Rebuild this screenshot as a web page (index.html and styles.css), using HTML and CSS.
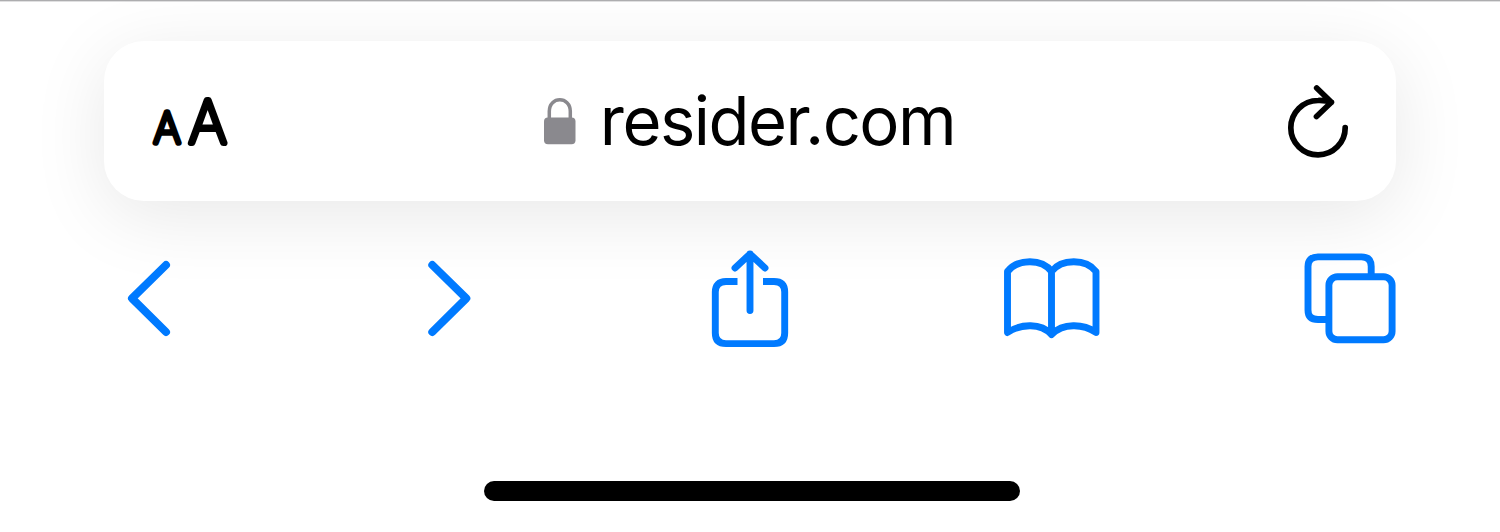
FILE: index.html
```html
<!DOCTYPE html>
<html lang="en">
<head>
<meta charset="utf-8">
<title>resider.com</title>
<link rel="stylesheet" href="styles.css">
</head>
<body>
<div class="browser-bar">
  <div class="address">
    <svg class="text-size" viewBox="0 0 82 60" role="img" aria-label="Text size">
      <text class="glyph small" x="3.7" y="52" textLength="26.6" lengthAdjust="spacingAndGlyphs">A</text>
      <text class="glyph large" x="39.1" y="52" textLength="37.4" lengthAdjust="spacingAndGlyphs">A</text>
    </svg>
    <div class="site">
      <svg class="lock" viewBox="0 0 32 46">
        <path d="M5.3 22V13.300C5.3-2 26.3-2 26.3 13.300V22" fill="none" stroke="#8a898e" stroke-width="3.5"/>
        <rect y="19.5" width="31.5" height="26.7" rx="4" fill="#8a898e"/>
      </svg>
      <span class="domain">resider.com</span>
    </div>
    <svg class="reload line" viewBox="0 0 64 76">
      <path d="M59.2 44.5A27.2 27.2 0 1 1 32 17.5Q39 17.2 45.4 19.3M30.7 5L45.4 19.3L30.5 33.5"/>
    </svg>
  </div>
  <nav class="tools">
    <svg class="chevron line" viewBox="0 0 44 76"><path d="M38 4L4 37.300L38 71"/></svg>
    <svg class="chevron line" viewBox="0 0 44 76"><path d="M4.300 4L38.300 37.300L4.300 71"/></svg>
    <svg class="share line" viewBox="0 0 78 100">
      <path class="butt" d="M26.500 32.500H15Q4.300 32.500 4.300 43V84Q4.300 94.600 15 94.600H63Q73.700 94.600 73.700 84V43Q73.700 32.500 63 32.500H52"/>
      <path d="M39 61.500V5M24 19L39 5L54 19"/>
    </svg>
    <svg class="book line" viewBox="0 0 98 82">
      <path d="M4.500 13.500C15 .5 39 .5 48.500 13.500C58.500 .5 83 .5 93 13.500V74.500C80 65.500 60 65 48.500 76.500C38 65 18 65.500 4.500 74.500ZM48.500 13.500V76.500"/>
    </svg>
    <svg class="tabs line" viewBox="0 0 92 92">
      <path class="butt" d="M23 66.500H14Q4 66.500 4 57V13.500Q4 3.900 14 3.900H57.500Q67.200 3.900 67.200 13.500V25"/>
      <rect x="24.900" y="23.800" width="63.200" height="63" rx="8.500"/>
    </svg>
  </nav>
  <div class="home-indicator"></div>
</div>
</body>
</html>
```
FILE: styles.css
```css
* { box-sizing: border-box; }
body { margin: 0; background: #fff; }
svg { display: block; flex: none; overflow: visible; }

.browser-bar {
  height: 532px;
  padding-top: 40px;
  border-top: 1px solid #adadaf;
  box-shadow: inset 0 1px #e0e0e1;
  display: flex;
  flex-direction: column;
  overflow: hidden;
}
.address {
  height: 160px;
  margin: 0 104px;
  padding: 0 46px;
  border-radius: 40px;
  background: #fff;
  box-shadow: 0 15px 76px rgba(0, 0, 0, .095);
  display: flex;
  align-items: center;
  justify-content: space-between;
}
.text-size { width: 82px; height: 60px; }
.glyph {
  font-family: Inter, sans-serif;
  font-weight: 100;
  stroke: #000;
  stroke-linejoin: round;
}
.small { font-size: 41.5px; stroke-width: 5.4px; }
.large { font-size: 58.8px; stroke-width: 6.2px; }

.site { display: flex; align-items: center; gap: 24px; margin-right: 19px; }
.lock { width: 32px; height: 46px; }
.domain {
  font: 400 67px/80px Inter, sans-serif;
  letter-spacing: -1.55px;
  color: #000;
}
.line {
  fill: none;
  stroke: #007aff;
  stroke-width: 6.9;
  stroke-linecap: round;
  stroke-linejoin: round;
}
.reload { width: 64px; height: 76px; stroke: #000; stroke-width: 5.7; }
.tools {
  height: 100px;
  margin-top: 48px;
  display: grid;
  grid-template-columns: repeat(5, 300px);
  align-items: center;
  justify-items: center;
}
.chevron { width: 44px; height: 76px; stroke-width: 8; }
.share { width: 78px; height: 100px; }
.book { width: 98px; height: 82px; margin-left: 4px; }
.tabs { width: 92px; height: 92px; }
.butt { stroke-linecap: butt; }
.home-indicator {
  width: 536px;
  height: 20px;
  margin: 132px 0 0 484px;
  border-radius: 10px;
  background: #000;
}
```
